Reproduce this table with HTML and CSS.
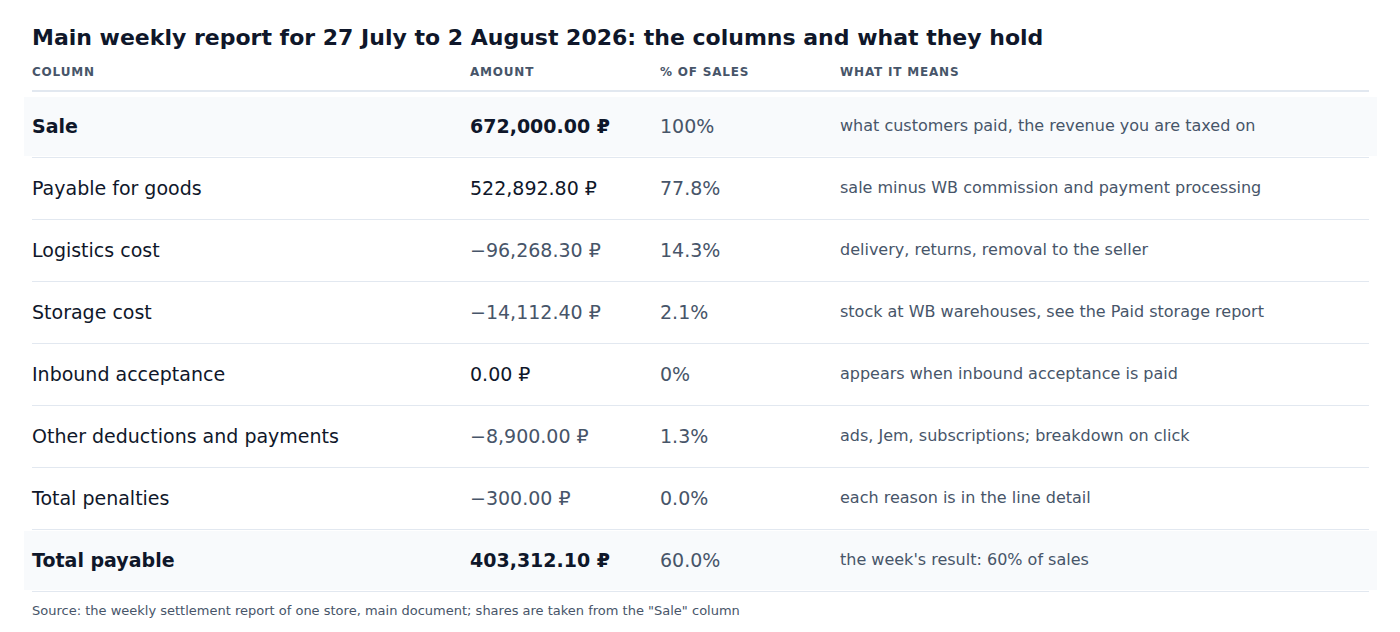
FILE: index.html
```html
<!DOCTYPE html>
<html>
<head>
<meta charset="utf-8">
<link rel="stylesheet" href="styles.css">
</head>
<body>
<div class="page">
  <h1 class="title">Main weekly report for 27 July to 2 August 2026: the columns and what they hold</h1>
  <div class="grid head">
    <div>Column</div>
    <div>Amount</div>
    <div>% of sales</div>
    <div>What it means</div>
  </div>
  <div class="rows">
    <div class="row hl">
      <div class="grid cells">
        <div class="name strong">Sale</div>
        <div class="amt strong">672,000.00 ₽</div>
        <div class="pct">100%</div>
        <div class="desc">what customers paid, the revenue you are taxed on</div>
      </div>
    </div>
    <div class="row">
      <div class="grid cells">
        <div class="name">Payable for goods</div>
        <div class="amt">522,892.80 ₽</div>
        <div class="pct">77.8%</div>
        <div class="desc">sale minus WB commission and payment processing</div>
      </div>
    </div>
    <div class="row">
      <div class="grid cells">
        <div class="name">Logistics cost</div>
        <div class="amt neg">−96,268.30 ₽</div>
        <div class="pct">14.3%</div>
        <div class="desc">delivery, returns, removal to the seller</div>
      </div>
    </div>
    <div class="row">
      <div class="grid cells">
        <div class="name">Storage cost</div>
        <div class="amt neg">−14,112.40 ₽</div>
        <div class="pct">2.1%</div>
        <div class="desc">stock at WB warehouses, see the Paid storage report</div>
      </div>
    </div>
    <div class="row">
      <div class="grid cells">
        <div class="name">Inbound acceptance</div>
        <div class="amt">0.00 ₽</div>
        <div class="pct">0%</div>
        <div class="desc">appears when inbound acceptance is paid</div>
      </div>
    </div>
    <div class="row">
      <div class="grid cells">
        <div class="name">Other deductions and payments</div>
        <div class="amt neg">−8,900.00 ₽</div>
        <div class="pct">1.3%</div>
        <div class="desc">ads, Jem, subscriptions; breakdown on click</div>
      </div>
    </div>
    <div class="row">
      <div class="grid cells">
        <div class="name">Total penalties</div>
        <div class="amt neg">−300.00 ₽</div>
        <div class="pct">0.0%</div>
        <div class="desc">each reason is in the line detail</div>
      </div>
    </div>
    <div class="row hl">
      <div class="grid cells">
        <div class="name strong">Total payable</div>
        <div class="amt strong">403,312.10 ₽</div>
        <div class="pct">60.0%</div>
        <div class="desc">the week's result: 60% of sales</div>
      </div>
    </div>
  </div>
  <p class="note">Source: the weekly settlement report of one store, main document; shares are taken from the "Sale" column</p>
</div>
</body>
</html>
```

FILE: styles.css
```css
* { box-sizing: border-box; }
html, body { margin: 0; padding: 0; background: #ffffff; }
body {
  font-family: "DejaVu Sans", "Liberation Sans", sans-serif;
  color: #0f172a;
}
.page {
  padding: 23px 31px 0 32px;
}
.title {
  margin: 0;
  font-size: 22px;
  line-height: 30px;
  font-weight: 700;
  color: #0f172a;
}
.grid {
  display: grid;
  grid-template-columns: 438px 190px 180px 1fr;
  align-items: center;
}
.head {
  margin-top: 8px;
  height: 31px;
  border-bottom: 2px solid #e2e8f0;
  font-size: 12px;
  font-weight: 700;
  letter-spacing: 0.8px;
  text-transform: uppercase;
  color: #475569;
  padding-bottom: 8px;
}
.rows {
  margin-top: 4px;
}
.row {
  height: 62px;
  border-bottom: 1px solid #e2e8f0;
  padding: 1px 0;
}
.cells {
  height: 59px;
  padding: 0 0 2px 0;
}
.row.hl .cells {
  margin: 0 -8px;
  padding: 0 8px 2px 8px;
  background: #f8fafc;
}
.name {
  font-size: 19px;
  color: #0f172a;
}
.amt {
  font-size: 19px;
  color: #0f172a;
}
.amt.neg { color: #475569; }
.strong { font-weight: 700; }
.pct {
  font-size: 19px;
  color: #475569;
}
.desc {
  font-size: 16px;
  color: #475569;
}
.note {
  margin: 11px 0 0;
  font-size: 13px;
  color: #475569;
}
```
